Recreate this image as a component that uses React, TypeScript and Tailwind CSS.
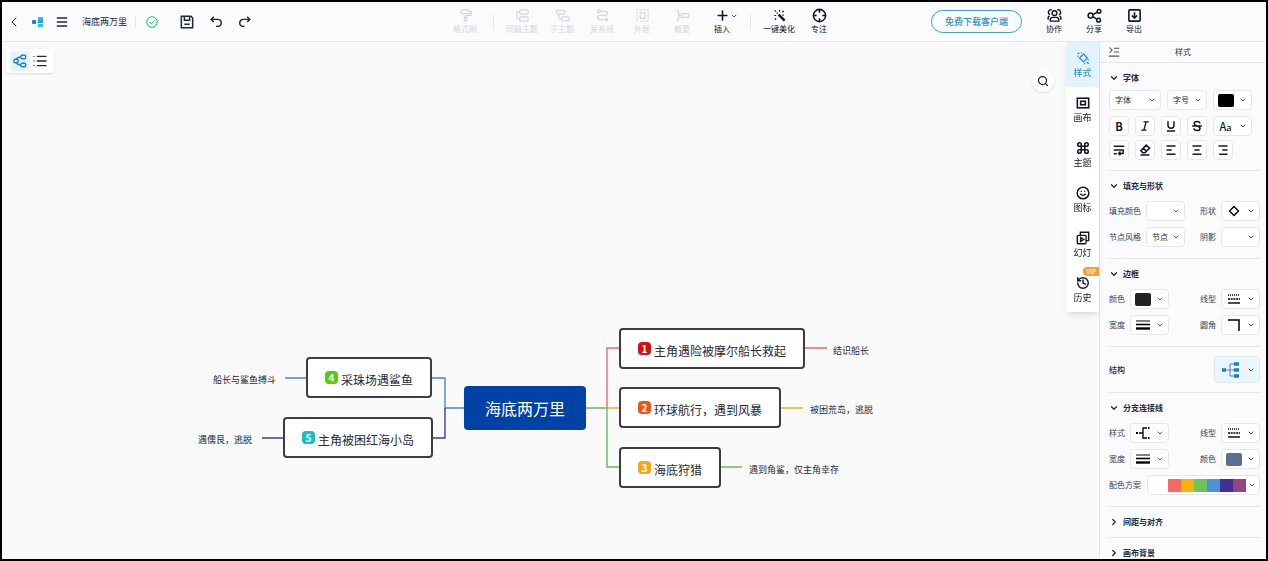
import type { ReactNode } from 'react';
import { ChevronDown, ChevronLeft, ChevronRight, Command, History, List, Menu, Plus, Search, Smile } from 'lucide-react';

type IconProps = { children: ReactNode; className?: string; width?: string };

function Icon({ children, className = 'size-[15px]', width = '1.5' }: IconProps) {
  return (
    <svg
      viewBox="0 0 16 16"
      className={className}
      fill="none"
      stroke="currentColor"
      strokeWidth={width}
      aria-hidden="true"
    >
      {children}
    </svg>
  );
}

const icons = {
  painter: (
    <Icon width="1.3">
      <rect x="3" y="2" width="9" height="4" rx="1" />
      <path d="M12 4h2v4H8v2M6.8 10h2.4v4H6.8z" />
    </Icon>
  ),
  sibling: (
    <Icon width="1.3">
      <rect x="5" y="2" width="9" height="4.500" rx="1.5" />
      <rect x="5" y="9.500" width="9" height="4.500" rx="1.5" />
      <path d="M5 4H3.500Q2 4 2 5.500v5Q2 12 3.500 12H5" />
    </Icon>
  ),
  child: (
    <Icon width="1.3">
      <rect x="1.500" y="2.500" width="9" height="4" rx="1.500" />
      <rect x="7" y="9.500" width="8" height="4" rx="1.500" />
      <path d="M4 6.500V10Q4 11.500 5.500 11.500H7" />
    </Icon>
  ),
  relation: (
    <Icon width="1.3">
      <circle cx="4" cy="3.500" r="1.500" />
      <path d="M5.500 3.500H11a2.200 2.200 0 0 1 0 4.400H5a2.200 2.200 0 0 0 0 4.400h8M11.500 10l2.300 2.300-2.300 2.200" />
    </Icon>
  ),
  frame: (
    <Icon width="1.3">
      <rect x="2" y="2" width="12" height="12" strokeDasharray="2 1.400" />
      <rect x="5.500" y="5" width="5" height="6" rx="1" />
    </Icon>
  ),
  summary: (
    <Icon width="1.3">
      <path d="M1.500 2.500Q4 2.500 4 5v6q0 2.500-2.500 2.500M4 8h3" />
      <rect x="7" y="6" width="8" height="4" rx="1" />
    </Icon>
  ),
  wand: (
    <Icon width="1.3">
      <path d="M7 7l6.500 6.500" strokeWidth="2.600" />
      <path d="M5 5l1 1M8 2v2M2.500 8h2M3 2.500l1.200 1.200M12.500 3L11 4.500M3 12.500L4.500 11M11 7.500h1.500" />
    </Icon>
  ),
  focus: (
    <Icon width="1.7">
      <circle cx="8" cy="8" r="6.500" />
      <path d="M8 1v4M8 11v4M1 8h4M11 8h4" />
    </Icon>
  ),
  people: (
    <Icon width="1.5">
      <circle cx="8" cy="5.500" r="2.500" />
      <path d="M3.500 14v-1.500Q3.500 10 6 10h4q2.500 0 2.500 2.500V14zM5 2.200A2.300 2.300 0 0 0 3.200 7M11 2.200A2.300 2.300 0 0 1 12.800 7M1.200 12.500V10.500q0-1.500 1.500-2.200M14.800 12.500V10.500q0-1.500-1.500-2.200" />
    </Icon>
  ),
  share: (
    <Icon width="1.600">
      <circle cx="3.800" cy="8" r="2.600" />
      <circle cx="12.800" cy="3.500" r="2" />
      <circle cx="12.300" cy="13" r="2" />
      <path d="M6.300 7l4.600-2.500M6.200 9.300l4.300 2.600" />
    </Icon>
  ),
  exportFile: (
    <Icon width="1.700">
      <rect x="2" y="2" width="12" height="12" rx="1" />
      <path d="M8 4.500v6M5.200 8L8 10.800 10.800 8" />
    </Icon>
  ),
  save: (
    <Icon className="size-3.5" width="1.700">
      <path d="M1.500 1.500h11l2 2v11h-13z" />
      <path d="M5 2v4h6V2M5 10.500h6" />
    </Icon>
  ),
  undo: (
    <Icon className="size-3.5" width="1.700">
      <path d="M5.500 2L2.500 5l3 3M2.500 5H10a4 4 0 0 1 0 8H8" />
    </Icon>
  ),
  redo: (
    <Icon className="size-3.5" width="1.700">
      <path d="M10.500 2l3 3-3 3M13.500 5H6a4 4 0 0 0 0 8h1.500" />
    </Icon>
  ),
  styleTab: (
    <Icon className="size-3.5" width="1.500">
      <path d="M8.500 3.500L13 8l-4.500 4.500L4 8z" />
      <path d="M2 2l1.500 1.500M2 5.500v1M5.500 2h1M12.500 12.500l2 2M14 9.800v1M9.500 14.200h1" strokeWidth="1.800" />
    </Icon>
  ),
  canvasTab: (
    <Icon className="size-3.5" width="1.800">
      <rect x="1.500" y="2.500" width="13" height="11" />
      <rect x="5.300" y="6" width="5.400" height="4" />
    </Icon>
  ),
  slideTab: (
    <Icon className="size-3.5" width="1.600">
      <rect x="1.500" y="5" width="10" height="9.500" rx="1" />
      <path d="M5 5V1.500h9.500v9.500h-3M5.300 7.500v4.500l3.500-2.200z" />
    </Icon>
  ),
  wrap: (
    <Icon className="size-3" width="2">
      <path d="M1 3h14M1 8h12.500v4.500H8M10 10l-2.500 2.500L10 15M1 13h4" />
    </Icon>
  ),
  eraser: (
    <Icon className="size-3" width="2">
      <path d="M9.500 1.500l4.500 4-6 6H5L2.500 9zM5.500 5.500l4.500 4M2 14.500h12" />
    </Icon>
  ),
  alignLeft: (
    <Icon className="size-3" width="2">
      <path d="M2 2.500h12M2 8h7M2 13.500h12" />
    </Icon>
  ),
  alignCenter: (
    <Icon className="size-3" width="2">
      <path d="M2 2.500h12M4.500 8h7M2 13.500h12" />
    </Icon>
  ),
  alignRight: (
    <Icon className="size-3" width="2">
      <path d="M2 2.500h12M7 8h7M3 13.500h11" />
    </Icon>
  ),
  italic: (
    <Icon className="size-3" width="1.800">
      <path d="M6 2.500h7M3 13.500h7M9.500 2.500l-3 11" />
    </Icon>
  ),
  underline: (
    <Icon className="size-3" width="2">
      <path d="M4 1.500V7a4 4 0 0 0 8 0V1.500M2.500 14.500h11" />
    </Icon>
  ),
  strike: (
    <Icon className="size-3" width="2">
      <path d="M12 4.500Q11.500 2 8 2 4.300 2 4.300 4.800q0 2.200 3.700 3.200 4 1 4 3.200 0 2.800-4 2.800-3.800 0-4.200-2.800M1.500 8h13" />
    </Icon>
  ),
  dashes: (
    <Icon className="size-4" width="1.400">
      <path d="M2 4h12" strokeDasharray="1 1" />
      <path d="M2 8h12" strokeDasharray="2 .7" />
      <path d="M2 12h12" />
    </Icon>
  ),
  weights: (
    <Icon className="size-4">
      <path d="M1 4h14" strokeWidth="1" />
      <path d="M1 7.500h14" strokeWidth="1.600" />
      <path d="M1 11.500h14" strokeWidth="2.400" />
    </Icon>
  ),
  diamond: (
    <Icon className="size-3" width="1.800">
      <path d="M8 2l6 6-6 6-6-6z" />
    </Icon>
  ),
  corner: (
    <Icon className="size-4">
      <path d="M2 3h11v11" />
    </Icon>
  ),
  branch: (
    <Icon className="size-4" width="1.300">
      <path d="M4 8h4M12 3H8v10h4" />
      <path d="M1 8h2M13 3h1.500M13 13h1.500" strokeWidth="2" />
    </Icon>
  ),
};

function Caret() {
  return <ChevronDown className="size-2 shrink-0 text-gray-600" strokeWidth={3} />;
}

type ToolProps = { label: string; icon: ReactNode; disabled?: boolean; caret?: boolean };

function Tool({ label, icon, disabled, caret }: ToolProps) {
  return (
    <button
      type="button"
      disabled={disabled}
      className="relative flex w-10 flex-col items-center whitespace-nowrap text-gray-900 disabled:text-gray-300"
    >
      {icon}
      <span className="text-[8px] leading-3">{label}</span>
      {caret && (
        <span className="absolute top-1 right-1">
          <Caret />
        </span>
      )}
    </button>
  );
}

function BarButton({ label, className = 'w-6', children }: { label: string; className?: string; children: ReactNode }) {
  return (
    <button type="button" aria-label={label} className={`flex shrink-0 justify-center ${className}`}>
      {children}
    </button>
  );
}

const tools: ToolProps[] = [
  { label: '同级主题', icon: icons.sibling, disabled: true },
  { label: '子主题', icon: icons.child, disabled: true },
  { label: '关系线', icon: icons.relation, disabled: true },
  { label: '外框', icon: icons.frame, disabled: true },
  { label: '概要', icon: icons.summary, disabled: true },
  { label: '插入', icon: <Plus className="size-[15px]" strokeWidth={2.5} />, caret: true },
];

function TopBar() {
  return (
    <header className="grid h-10 shrink-0 grid-cols-[1fr_auto_1fr] items-center border-b border-gray-200 bg-[#fbfbfd]">
      <div className="flex items-center text-gray-800">
        <BarButton label="返回">
          <ChevronLeft className="size-4" strokeWidth={1.5} />
        </BarButton>
        <BarButton label="首页">
          <svg viewBox="0 0 12 12" className="size-3" aria-hidden="true">
            <path d="M4 6h3M7 2v8" stroke="#7fd0f0" strokeWidth="1" />
            <rect x="0" y="4" width="4" height="4" rx="1" fill="#1487d8" />
            <rect x="6" y="1" width="5" height="3" fill="#35b9e6" />
            <rect x="6" y="4" width="5" height="3" fill="#1fa3e0" />
            <rect x="6" y="8" width="5" height="3" fill="#35c5dc" />
          </svg>
        </BarButton>
        <BarButton label="菜单">
          <Menu className="size-3.5" strokeWidth={2.5} />
        </BarButton>
        <h1 className="ml-2 text-[9px] whitespace-nowrap">海底两万里</h1>
        <span className="ml-2 h-3 w-px bg-gray-200" />
        <BarButton label="已保存" className="ml-1 w-6 text-green-500">
          <Icon className="size-3" width="1.300">
            <circle cx="8" cy="8" r="7" />
            <path d="M4.500 8l2.500 2.500 4.500-4.500" />
          </Icon>
        </BarButton>
        <div className="ml-2 flex">
          <BarButton label="保存" className="w-[29px]">
            {icons.save}
          </BarButton>
          <BarButton label="撤销" className="w-[29px]">
            {icons.undo}
          </BarButton>
          <BarButton label="重做" className="w-[29px]">
            {icons.redo}
          </BarButton>
        </div>
      </div>

      <div className="flex items-center pl-4">
        <Tool label="格式刷" icon={icons.painter} disabled />
        <span className="mx-2 h-4 w-px bg-gray-200" />
        {tools.map((t) => (
          <Tool key={t.label} {...t} />
        ))}
        <span className="mx-2 h-4 w-px bg-gray-200" />
        <Tool label="一键美化" icon={icons.wand} />
        <Tool label="专注" icon={icons.focus} />
      </div>

      <div className="flex items-center justify-end pr-28">
        <a
          href="#download"
          className="mr-3 flex h-[23px] w-[91px] shrink-0 items-center justify-center rounded-full border border-[#3f9fd0] text-[9px] font-medium text-[#2e93cc]"
        >
          免费下载客户端
        </a>
        <Tool label="协作" icon={icons.people} />
        <Tool label="分享" icon={icons.share} />
        <Tool label="导出" icon={icons.exportFile} />
      </div>
    </header>
  );
}

const topics = [
  { no: 1, text: '主角遇险被摩尔船长救起', x: 617, y: 286, badge: 'bg-[#d90d12]' },
  { no: 2, text: '环球航行，遇到风暴', x: 617, y: 345, badge: 'bg-[#ee5514]' },
  { no: 3, text: '海底狩猎', x: 617, y: 405, badge: 'bg-[#f9a51a]' },
  { no: 4, text: '采珠场遇鲨鱼', x: 304, y: 315, badge: 'bg-[#55cc0e]' },
  { no: 5, text: '主角被困红海小岛', x: 281, y: 375, badge: 'bg-[#17bfc4]' },
];

const leaves = [
  { text: '结识船长', x: 831, y: 301 },
  { text: '被困荒岛，逃脱', x: 808, y: 360 },
  { text: '遇到角鲨，仅主角幸存', x: 747, y: 420 },
  { text: '船长与鲨鱼搏斗', x: 211, y: 330 },
  { text: '遇儒艮，逃脱', x: 196, y: 390 },
];

const links = [
  { d: 'M605 366V306H617M802 306h23', color: '#ee6a62' },
  { d: 'M605 366h12M779 366h22', color: '#edb51c' },
  { d: 'M584 366h21v59h12M718 425h22', color: '#66bb5e' },
  { d: 'M462 366h-19v-30h-13M304 336h-21', color: '#4a86c9' },
  { d: 'M443 366v30h-13M281 396h-21', color: '#4a3a93' },
];

function MindMap() {
  return (
    <main className="relative min-w-0 flex-1">
      <div className="absolute top-[7px] left-1 flex h-6 items-center rounded bg-white px-1 shadow">
        <button type="button" aria-label="思维导图" className="flex size-5 items-center justify-center rounded bg-[#e6f4fd] text-[#1784cc]">
          <Icon className="size-3.5" width="1.600">
            <rect x="1" y="6" width="5" height="4" rx="1.500" />
            <rect x="9" y="1.500" width="5.500" height="4" rx="1.500" />
            <rect x="9" y="10.500" width="5.500" height="4" rx="1.500" />
            <path d="M4 6q1-2.500 5-2.500M4 10q1 2.500 5 2.500" />
          </Icon>
        </button>
        <button type="button" aria-label="大纲" className="flex size-5 items-center justify-center text-gray-800">
          <List className="size-4" />
        </button>
      </div>

      <button
        type="button"
        aria-label="搜索"
        className="absolute top-7 right-3 flex size-[22px] items-center justify-center rounded-full bg-white text-gray-800 shadow"
      >
        <Search className="size-3" strokeWidth={2.5} />
      </button>

      <svg className="pointer-events-none absolute inset-0 size-full" fill="none" strokeWidth="1.4" aria-hidden="true">
        {links.map((l) => (
          <path key={l.d} d={l.d} stroke={l.color} />
        ))}
      </svg>

      <div className="absolute top-[344px] left-[462px] flex h-11 w-[122px] items-center justify-center rounded-sm bg-[#0142a6] text-base text-white">
        海底两万里
      </div>

      {topics.map((t) => (
        <div
          key={t.no}
          className="absolute flex h-[41px] items-center gap-[3px] rounded border-2 border-[#3c3c42] bg-white px-[17px] whitespace-nowrap"
          style={{ left: t.x, top: t.y }}
        >
          <span className={`flex size-[13px] items-center justify-center rounded text-[10px] leading-none font-bold text-white ${t.badge}`}>
            {t.no}
          </span>
          <span className="pt-1 text-xs text-gray-800">{t.text}</span>
        </div>
      ))}

      {leaves.map((l) => (
        <span
          key={l.text}
          className="absolute text-[9px] leading-4 whitespace-nowrap text-gray-800"
          style={{ left: l.x, top: l.y }}
        >
          {l.text}
        </span>
      ))}
    </main>
  );
}

const tabs = [
  { label: '样式', icon: icons.styleTab, active: true },
  { label: '画布', icon: icons.canvasTab },
  { label: '主题', icon: <Command className="size-3.5" strokeWidth={2.8} /> },
  { label: '图标', icon: <Smile className="size-3.5" strokeWidth={2.5} /> },
  { label: '幻灯', icon: icons.slideTab },
  { label: '历史', icon: <History className="size-3.5" strokeWidth={2.5} />, vip: true },
];

function SideTabs() {
  return (
    <nav className="z-10 w-[33px] shrink-0 self-start rounded-bl bg-white shadow-md">
      {tabs.map((t) => (
        <button
          key={t.label}
          type="button"
          className={`relative flex h-[45px] w-full flex-col items-center justify-center gap-0.5 ${
            t.active ? 'bg-[#e3f3fd] text-[#2390d0]' : 'text-gray-900'
          }`}
        >
          {t.vip && (
            <span className="absolute top-0 right-0 rounded-l-sm bg-[#f5a03c] px-[3px] text-[6px] leading-[9px] font-bold text-[#fff0c8]">
              VIP
            </span>
          )}
          {t.icon}
          <span className="text-[9px] leading-3">{t.label}</span>
        </button>
      ))}
    </nav>
  );
}

const box = 'flex h-5 items-center justify-center rounded-sm border border-gray-200 bg-white';

function Pick({ label, children, className = 'w-[39px]' }: { label: string; children?: ReactNode; className?: string }) {
  return (
    <button type="button" aria-label={label} aria-haspopup="listbox" className={`${box} gap-1 pr-1 pl-0.5 ${className}`}>
      <span className="flex flex-1 items-center justify-center">{children}</span>
      <Caret />
    </button>
  );
}

function TextSelect({ label, value, className = 'w-[39px]' }: { label: string; value: string; className?: string }) {
  return (
    <span className={`relative ${box} ${className}`}>
      <select
        aria-label={label}
        defaultValue={value}
        className="size-full appearance-none bg-transparent pl-[5px] text-[8px] text-gray-800 outline-none"
      >
        <option>{value}</option>
      </select>
      <span className="pointer-events-none absolute right-1">
        <Caret />
      </span>
    </span>
  );
}

function Field({ label, children }: { label: string; children: ReactNode }) {
  return (
    <div className="flex items-center gap-[5px]">
      <span className="text-[8px] whitespace-nowrap text-gray-700">{label}</span>
      {children}
    </div>
  );
}

function Section({ title, children }: { title: string; children: ReactNode }) {
  return (
    <section className="border-b border-gray-200 pt-[7px] pb-[11px]">
      <h3 className="mb-[7px]">
        <button type="button" className="flex h-4 items-center gap-1 text-[8px] font-bold text-gray-800">
          <ChevronDown className="size-2.5" strokeWidth={3} />
          {title}
        </button>
      </h3>
      <div className="space-y-1.5">{children}</div>
    </section>
  );
}

function ClosedSection({ title }: { title: string }) {
  return (
    <h3 className="border-b border-gray-200 py-[7px]">
      <button type="button" className="flex h-4 items-center gap-1 text-[8px] font-bold text-gray-800">
        <ChevronRight className="size-2.5" strokeWidth={3} />
        {title}
      </button>
    </h3>
  );
}

function Swatch({ color }: { color: string }) {
  return <span className={`h-[13px] w-4 rounded-xs ${color}`} />;
}

const textStyles = [
  { label: '斜体', icon: icons.italic },
  { label: '下划线', icon: icons.underline },
  { label: '删除线', icon: icons.strike },
];

const paragraphStyles = [
  { label: '换行', icon: icons.wrap },
  { label: '清除格式', icon: icons.eraser },
  { label: '左对齐', icon: icons.alignLeft },
  { label: '居中', icon: icons.alignCenter },
  { label: '右对齐', icon: icons.alignRight },
];

const palette = ['bg-[#f66b5e]', 'bg-[#f8b20c]', 'bg-[#70c35a]', 'bg-[#4f8fdb]', 'bg-[#442f95]', 'bg-[#964584]'];

function StylePanel() {
  return (
    <aside className="w-[167px] shrink-0 overflow-y-auto border-l border-gray-200 bg-[#fbfbfd] [scrollbar-width:none]">
      <div className="relative flex h-[21px] items-center justify-center border-b border-gray-200">
        <button type="button" aria-label="收起" className="absolute left-2 text-gray-600">
          <Icon className="size-3" width="1.400">
            <path d="M2 2l3.500 3.500L2 9M8 3h7M8 8h7M1 13.500h14" />
          </Icon>
        </button>
        <h2 className="text-[8px] text-gray-800">样式</h2>
      </div>

      <div className="pr-1.5 pl-[9px]">
        <section className="border-b border-gray-200 pt-[7px] pb-2.5">
          <h3 className="mb-1">
            <button type="button" className="flex h-4 items-center gap-1 text-[8px] font-bold text-gray-800">
              <ChevronDown className="size-2.5" strokeWidth={3} />
              字体
            </button>
          </h3>
          <div className="flex gap-1.5">
            <TextSelect label="字体" value="字体" className="w-[52px]" />
            <TextSelect label="字号" value="字号" className="w-10" />
            <Pick label="字体颜色">
              <Swatch color="bg-black" />
            </Pick>
          </div>
          <div className="mt-1.5 flex gap-1.5 text-gray-900">
            <button type="button" aria-label="加粗" className={`${box} w-5 text-[11px] font-bold`}>
              B
            </button>
            {textStyles.map((s) => (
              <button key={s.label} type="button" aria-label={s.label} className={`${box} w-5`}>
                {s.icon}
              </button>
            ))}
            <Pick label="大小写">
              <span className="text-[11px] font-medium">
                A<span className="text-[9px]">a</span>
              </span>
            </Pick>
          </div>
          <div className="mt-1 flex gap-1.5 text-gray-900">
            {paragraphStyles.map((s) => (
              <button key={s.label} type="button" aria-label={s.label} className={`${box} w-5`}>
                {s.icon}
              </button>
            ))}
          </div>
        </section>

        <Section title="填充与形状">
          <div className="flex justify-between">
            <Field label="填充颜色">
              <Pick label="填充颜色" />
            </Field>
            <Field label="形状">
              <Pick label="形状">{icons.diamond}</Pick>
            </Field>
          </div>
          <div className="flex justify-between">
            <Field label="节点风格">
              <TextSelect label="节点风格" value="节点" />
            </Field>
            <Field label="阴影">
              <Pick label="阴影" />
            </Field>
          </div>
        </Section>

        <Section title="边框">
          <div className="flex justify-between">
            <Field label="颜色">
              <Pick label="边框颜色">
                <Swatch color="bg-[#222222]" />
              </Pick>
            </Field>
            <Field label="线型">
              <Pick label="边框线型">{icons.dashes}</Pick>
            </Field>
          </div>
          <div className="flex justify-between">
            <Field label="宽度">
              <Pick label="边框宽度">{icons.weights}</Pick>
            </Field>
            <Field label="圆角">
              <Pick label="圆角">{icons.corner}</Pick>
            </Field>
          </div>
        </Section>

        <section className="flex items-center justify-between border-b border-gray-200 py-[9px]">
          <h3 className="text-[8px] font-medium text-gray-800">结构</h3>
          <button
            type="button"
            aria-label="结构"
            aria-haspopup="listbox"
            className="flex h-[27px] w-[46px] items-center justify-between rounded-sm border border-gray-200 bg-[#eaf6fe] pr-1 pl-1.5"
          >
            <svg viewBox="0 0 20 18" className="h-[18px] w-5" fill="none" aria-hidden="true">
              <path d="M4 9h9M13 3H9v12h4" stroke="#5b7f9c" />
              <path d="M1 9h4M13 3h5M13 9h5M13 15h5" stroke="#1c7fc8" strokeWidth="3.600" />
            </svg>
            <Caret />
          </button>
        </section>

        <Section title="分支连接线">
          <div className="flex justify-between">
            <Field label="样式">
              <Pick label="连接线样式">{icons.branch}</Pick>
            </Field>
            <Field label="线型">
              <Pick label="连接线线型">{icons.dashes}</Pick>
            </Field>
          </div>
          <div className="flex justify-between">
            <Field label="宽度">
              <Pick label="连接线宽度">{icons.weights}</Pick>
            </Field>
            <Field label="颜色">
              <Pick label="连接线颜色">
                <Swatch color="bg-[#5b6e91]" />
              </Pick>
            </Field>
          </div>
          <div className="flex items-center justify-between">
            <span className="text-[8px] text-gray-700">配色方案</span>
            <button type="button" aria-label="配色方案" aria-haspopup="listbox" className={`${box} w-[113px] pr-[3px] pl-5`}>
              {palette.map((c) => (
                <span key={c} className={`h-[13px] flex-1 ${c}`} />
              ))}
              <span className="pl-0.5">
                <Caret />
              </span>
            </button>
          </div>
        </Section>

        <ClosedSection title="间距与对齐" />
        <ClosedSection title="画布背景" />
      </div>
    </aside>
  );
}

export default function App() {
  return (
    <div className='flex h-screen flex-col overflow-hidden border-2 border-black bg-[#fafafa] font-["Noto_Sans_CJK_SC",sans-serif]'>
      <TopBar />
      <div className="flex min-h-0 flex-1">
        <MindMap />
        <SideTabs />
        <StylePanel />
      </div>
    </div>
  );
}
